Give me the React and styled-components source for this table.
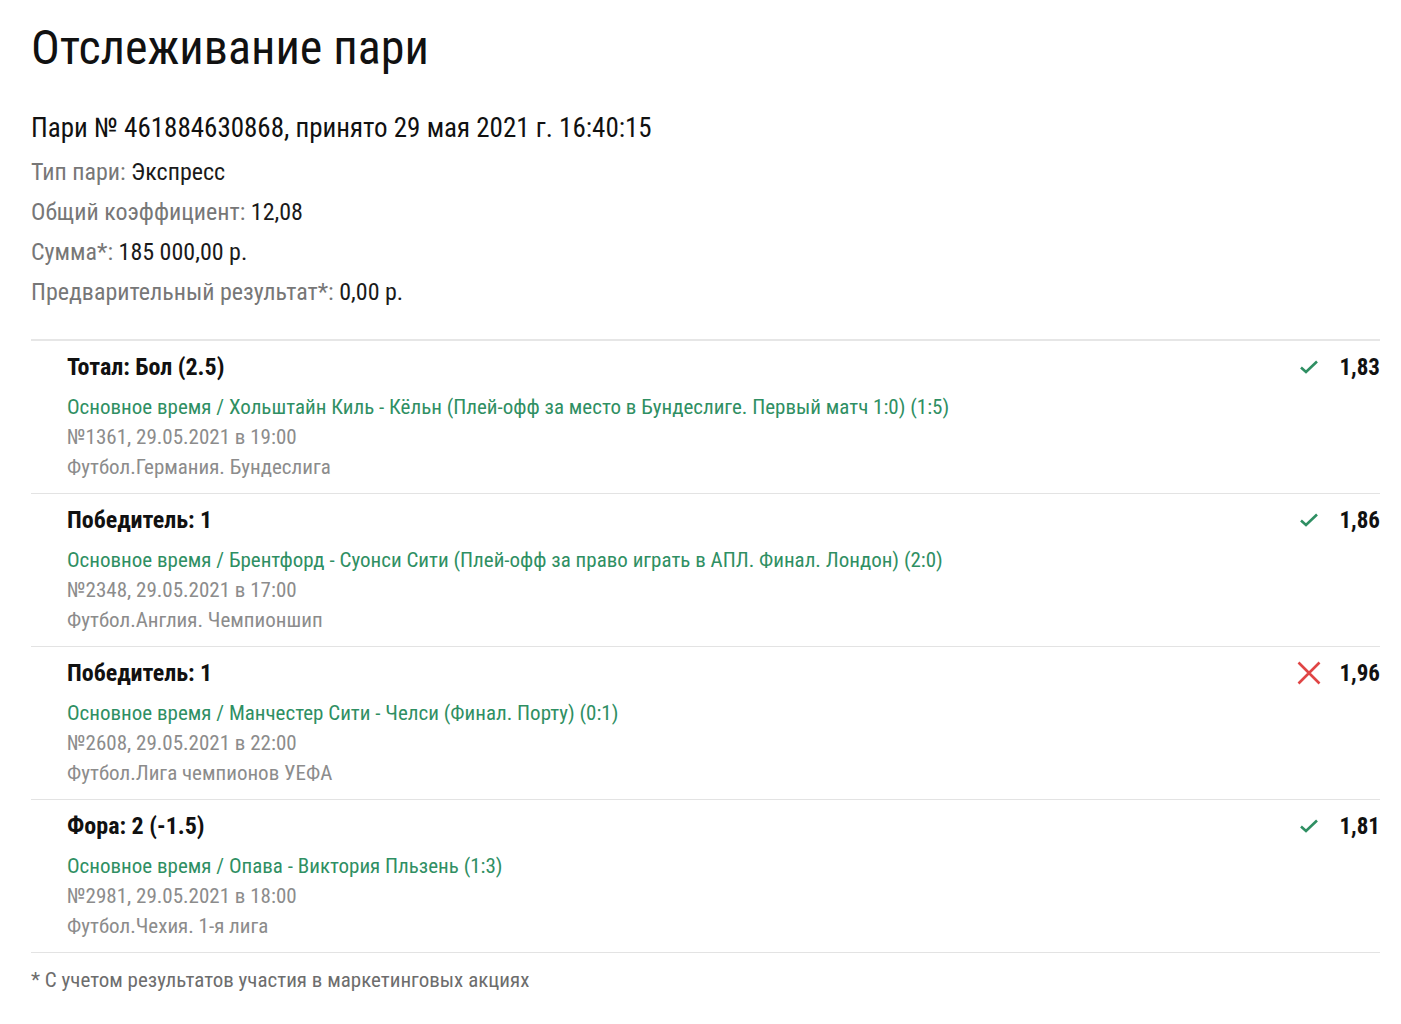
import React from 'react';
import styled, { createGlobalStyle } from 'styled-components';

const GlobalStyle = createGlobalStyle`
  html, body {
    margin: 0;
    padding: 0;
    background: #fff;
  }
  body {
    font-family: "Roboto Condensed", Roboto, "Liberation Sans", sans-serif;
    color: #111;
  }
`;

const bets = [
  {
    title: 'Тотал: Бол (2.5)',
    event: 'Основное время / Хольштайн Киль - Кёльн (Плей-офф за место в Бундеслиге. Первый матч 1:0) (1:5)',
    num: '№1361, 29.05.2021 в 19:00',
    league: 'Футбол.Германия. Бундеслига',
    won: true,
    coef: '1,83',
  },
  {
    title: 'Победитель: 1',
    event: 'Основное время / Брентфорд - Суонси Сити (Плей-офф за право играть в АПЛ. Финал. Лондон) (2:0)',
    num: '№2348, 29.05.2021 в 17:00',
    league: 'Футбол.Англия. Чемпионшип',
    won: true,
    coef: '1,86',
  },
  {
    title: 'Победитель: 1',
    event: 'Основное время / Манчестер Сити - Челси (Финал. Порту) (0:1)',
    num: '№2608, 29.05.2021 в 22:00',
    league: 'Футбол.Лига чемпионов УЕФА',
    won: false,
    coef: '1,96',
  },
  {
    title: 'Фора: 2 (-1.5)',
    event: 'Основное время / Опава - Виктория Пльзень (1:3)',
    num: '№2981, 29.05.2021 в 18:00',
    league: 'Футбол.Чехия. 1-я лига',
    won: true,
    coef: '1,81',
  },
];

const Page = styled.div`
  padding: 20px 21px 0 31px;
`;

const Heading = styled.h1`
  margin: 0;
  font-size: 48px;
  font-weight: 400;
  line-height: 56px;
  color: #111;
`;

const BetNumber = styled.div`
  margin-top: 37px;
  font-size: 27px;
  line-height: 30px;
  color: #111;
`;

const InfoList = styled.div`
  margin-top: 9px;
  display: flex;
  flex-direction: column;
`;

const InfoRow = styled.div`
  font-size: 24px;
  line-height: 40px;
  color: #777;
  span {
    color: #1a1a1a;
  }
`;

const Bets = styled.div`
  margin-top: 27px;
  border-top: 2px solid #e6e6e6;
`;

const Bet = styled.div`
  display: flex;
  align-items: flex-start;
  padding: 11px 0 11px 36px;
  border-bottom: 1px solid #e3e3e3;
`;

const BetBody = styled.div`
  flex: 1;
  display: flex;
  flex-direction: column;
`;

const BetTitle = styled.div`
  font-size: 24px;
  font-weight: 700;
  line-height: 30px;
  margin-bottom: 10px;
  color: #111;
`;

const Line = styled.div`
  font-size: 21px;
  line-height: 30px;
  color: ${(p) => (p.$green ? '#2f8f63' : '#8c8c8c')};
`;

const Result = styled.div`
  display: flex;
  align-items: center;
  gap: 19px;
  height: 30px;
`;

const Coef = styled.div`
  font-size: 23px;
  font-weight: 700;
  color: #111;
`;

const Footnote = styled.div`
  margin-top: 15px;
  font-size: 21px;
  line-height: 24px;
  color: #6d6d6d;
`;

const Check = () => (
  <svg width="24" height="24" viewBox="0 0 24 24">
    <path d="M4 12.5 L9 17 L20 6.5" fill="none" stroke="#2f8f63" strokeWidth="2.6" />
  </svg>
);

const Cross = () => (
  <svg width="24" height="24" viewBox="0 0 24 24">
    <path d="M1.5 1.5 L22.5 22.5 M22.5 1.5 L1.5 22.5" fill="none" stroke="#e04545" strokeWidth="2.6" />
  </svg>
);

export default function App() {
  return (
    <>
      <GlobalStyle />
      <Page>
        <Heading>Отслеживание пари</Heading>
        <BetNumber>Пари № 461884630868, принято 29 мая 2021 г. 16:40:15</BetNumber>
        <InfoList>
          <InfoRow>Тип пари: <span>Экспресс</span></InfoRow>
          <InfoRow>Общий коэффициент: <span>12,08</span></InfoRow>
          <InfoRow>Сумма*: <span>185 000,00 р.</span></InfoRow>
          <InfoRow>Предварительный результат*: <span>0,00 р.</span></InfoRow>
        </InfoList>
        <Bets>
          {bets.map((b, i) => (
            <Bet key={i}>
              <BetBody>
                <BetTitle>{b.title}</BetTitle>
                <Line $green>{b.event}</Line>
                <Line>{b.num}</Line>
                <Line>{b.league}</Line>
              </BetBody>
              <Result>
                {b.won ? <Check /> : <Cross />}
                <Coef>{b.coef}</Coef>
              </Result>
            </Bet>
          ))}
        </Bets>
        <Footnote>* С учетом результатов участия в маркетинговых акциях</Footnote>
      </Page>
    </>
  );
}
